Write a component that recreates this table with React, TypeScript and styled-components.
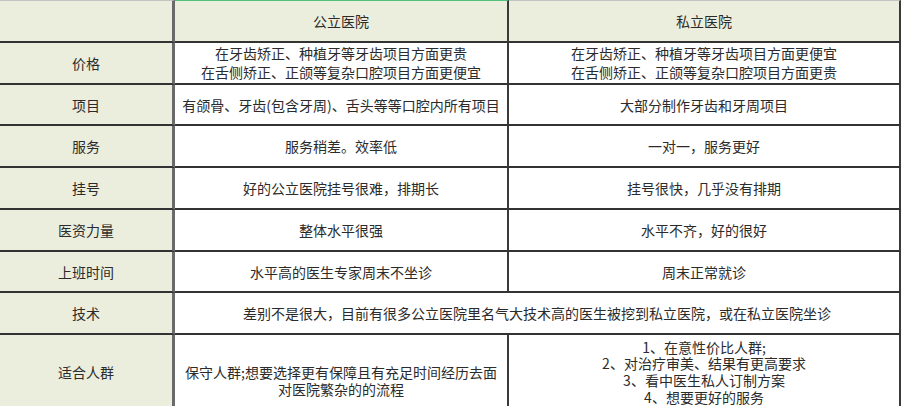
import React from "react";
import styled, { createGlobalStyle } from "styled-components";

const Global = createGlobalStyle`
  html, body { margin: 0; padding: 0; background: #ffffff; }
  body {
    font-family: "Noto Sans CJK SC", "Liberation Sans", sans-serif;
    font-size: 14px;
    color: #2b2b2b;
    overflow: hidden;
  }
`;

const Table = styled.div`
  width: 901px;
  display: flex;
  flex-direction: column;
`;

const Row = styled.div<{ $h: number }>`
  display: flex;
  height: ${(p) => p.$h}px;
  flex: none;
`;

type Col = "label" | "pub" | "pri" | "span";

const widths: Record<Col, number> = { label: 175, pub: 334, pri: 392, span: 726 };

const Cell = styled.div<{
  $col: Col;
  $head?: boolean;
  $top?: string;
  $lh?: number;
  $pt?: number;
}>`
  box-sizing: border-box;
  width: ${(p) => widths[p.$col]}px;
  flex: none;
  display: flex;
  align-items: center;
  justify-content: center;
  text-align: center;
  white-space: nowrap;
  line-height: ${(p) => p.$lh ?? 18}px;
  padding-top: ${(p) => p.$pt ?? 0}px;
  background: ${(p) => (p.$head || p.$col === "label" ? "#ebeedd" : "#ffffff")};
  border-bottom: 2px solid #333333;
  border-right: ${(p) =>
    p.$col === "label" ? "3px solid #6a6a6a" : "2px solid #3a3a3a"};
  ${(p) => (p.$top ? `border-top: ${p.$top};` : "")}
`;

const Lines: React.FC<{ lines: string[] }> = ({ lines }) => (
  <div>
    {lines.map((l, i) => (
      <div key={i}>{l}</div>
    ))}
  </div>
);

type RowData = {
  label: string;
  h: number;
  pub?: string[];
  pri?: string[];
  span?: string;
  lh?: number;
};

const rows: RowData[] = [
  {
    label: "价格",
    h: 42,
    lh: 19,
    pub: ["在牙齿矫正、种植牙等牙齿项目方面更贵", "在舌侧矫正、正颌等复杂口腔项目方面更便宜"],
    pri: ["在牙齿矫正、种植牙等牙齿项目方面更便宜", "在舌侧矫正、正颌等复杂口腔项目方面更贵"],
  },
  {
    label: "项目",
    h: 41,
    pub: ["有颌骨、牙齿(包含牙周)、舌头等等口腔内所有项目"],
    pri: ["大部分制作牙齿和牙周项目"],
  },
  { label: "服务", h: 42, pub: ["服务稍差。效率低"], pri: ["一对一，服务更好"] },
  { label: "挂号", h: 42, pub: ["好的公立医院挂号很难，排期长"], pri: ["挂号很快，几乎没有排期"] },
  { label: "医资力量", h: 42, pub: ["整体水平很强"], pri: ["水平不齐，好的很好"] },
  { label: "上班时间", h: 41, pub: ["水平高的医生专家周末不坐诊"], pri: ["周末正常就诊"] },
  {
    label: "技术",
    h: 42,
    span: "差别不是很大，目前有很多公立医院里名气大技术高的医生被挖到私立医院，或在私立医院坐诊",
  },
];

export default function App() {
  return (
    <>
      <Global />
      <Table>
        <Row $h={43}>
          <Cell $col="label" $head $top="1px solid #c4c4c4" />
          <Cell $col="pub" $head $top="1px solid #4fbf7a">
            公立医院
          </Cell>
          <Cell $col="pri" $head $top="1px solid #c4c4c4">
            私立医院
          </Cell>
        </Row>
        {rows.map((r) => (
          <Row key={r.label} $h={r.h}>
            <Cell $col="label">{r.label}</Cell>
            {r.span ? (
              <Cell $col="span">{r.span}</Cell>
            ) : (
              <>
                <Cell $col="pub" $lh={r.lh}>
                  <Lines lines={r.pub!} />
                </Cell>
                <Cell $col="pri" $lh={r.lh}>
                  <Lines lines={r.pri!} />
                </Cell>
              </>
            )}
          </Row>
        ))}
        <Row $h={76}>
          <Cell $col="label">适合人群</Cell>
          <Cell $col="pub" $lh={16.5} $pt={17}>
            <Lines lines={["保守人群;想要选择更有保障且有充足时间经历去面", "对医院繁杂的的流程"]} />
          </Cell>
          <Cell $col="pri" $lh={16.7}>
            <Lines
              lines={[
                "1、在意性价比人群;",
                "2、对治疗审美、结果有更高要求",
                "3、看中医生私人订制方案",
                "4、想要更好的服务",
              ]}
            />
          </Cell>
        </Row>
      </Table>
    </>
  );
}
